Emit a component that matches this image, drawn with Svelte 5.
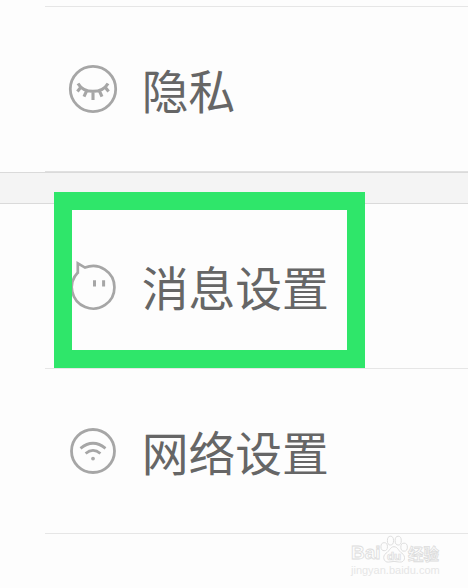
<script>
  const privacy = '隐私';
  const messages = '消息设置';
  const network = '网络设置';
</script>

<main>
  <div class="top"></div>
  <section class="row">
    <svg class="icon" viewBox="0 0 50 50">
      <circle cx="25" cy="25" r="22.7" />
      <path class="lash" d="M10 19.5C16 30 34 30 40 19.5M12.8 23.3l-3.4 4.2M18.8 26.5l-2.8 6.2M25 27.8V36M31.2 26.5l2.8 6.2M37.2 23.3l3.4 4.2" />
    </svg>
    <span>{privacy}</span>
  </section>
  <div class="gap"></div>
  <section class="row second">
    <svg class="icon" viewBox="0 0 50 50">
      <path class="thin" d="M9.8 12.8V2.3L17 6.6A21.3 21.3 0 1 1 9.8 11.5" />
      <path class="eye" d="M26.5 19.2v6.3M35.6 19.2v6.3" />
    </svg>
    <span>{messages}</span>
  </section>
  <section class="row third">
    <svg class="icon" viewBox="0 0 50 50">
      <circle cx="25" cy="25" r="21.5" />
      <path d="M12.5 22.3Q25 12.2 37.5 22.3M17.6 27.5Q25 21.3 32.4 27.5" />
      <circle class="dot" cx="25" cy="32.6" r="1.9" />
    </svg>
    <span>{network}</span>
  </section>
  <div class="frame"></div>
  <div class="watermark">
    <div class="brand">
      <b>Bai</b>
      <svg viewBox="0 0 30 30">
        <ellipse cx="4.5" cy="12" rx="3.5" ry="4.3" />
        <ellipse cx="11.2" cy="5.5" rx="3.3" ry="4.7" />
        <ellipse cx="19.5" cy="5.5" rx="3.3" ry="4.7" />
        <ellipse cx="25.8" cy="12.5" rx="3.5" ry="4.3" />
        <path d="M15 12C11 12 10 17 6.5 19C2 22 4 29 9 28.5Q15 27 21 28.5C27 29 28 22 23.5 19C20 17 19 12 15 12Z" />
        <text x="7.5" y="26">du</text>
      </svg>
      <b class="cn">经验</b>
    </div>
    <div class="site">jingyan.baidu.com</div>
  </div>
</main>

<style>
  :global(body) { margin: 0; background: #fdfdfd; }
  main {
    position: relative;
    width: 468px;
    height: 588px;
    overflow: hidden;
    background: #fdfdfd;
    font-family: "Noto Sans CJK SC", sans-serif;
  }
  .top { height: 6px; }
  .row {
    box-sizing: border-box;
    height: 166px;
    margin-left: 45px;
    padding-left: 23px;
    border-top: 1px solid #e6e6e6;
    border-bottom: 1px solid #e0e0e0;
    display: flex;
    align-items: center;
    color: #666;
    font-size: 46.8px;
    line-height: 68px;
  }
  .row span {
    margin-left: 23.7px;
    white-space: nowrap;
  }
  .icon {
    width: 50px;
    height: 50px;
    flex: none;
    overflow: visible;
    fill: none;
    stroke: #a6a6a6;
    stroke-width: 2.8;
  }
  .lash { stroke-width: 3.1; }
  .thin { stroke-width: 2.7; }
  .eye { stroke-width: 3; }
  .dot { fill: #aaa; stroke: none; }
  .gap {
    box-sizing: border-box;
    height: 32px;
    background: #f4f4f4;
    border-top: 1px solid #dadada;
    border-bottom: 1px solid #dadada;
  }
  .second { height: 165px; border-top: 0; border-bottom: 1px solid #e6e6e6; }
  .third { height: 165px; border-top: 0; border-bottom: 1px solid #e6e6e6; }
  .frame {
    position: absolute;
    left: 54px;
    top: 192px;
    width: 275px;
    height: 140px;
    border: 18px solid #2fe66a;
  }
  .watermark {
    position: absolute;
    left: 351px;
    top: 533px;
    width: 95px;
    color: #fdfdfd;
    font-family: "Liberation Sans", sans-serif;
  }
  .brand { display: flex; align-items: flex-end; height: 31px; }
  .brand b {
    font-size: 19px;
    line-height: 24px;
    width: 29px;
    margin-bottom: -1px;
    -webkit-text-stroke: 0.8px #dcdcdc;
  }
  .brand svg {
    width: 28px;
    height: 29px;
    flex: none;
    fill: #fdfdfd;
    stroke: #dcdcdc;
    stroke-width: 1;
  }
  .brand text { font-size: 12.5px; font-weight: bold; stroke-width: 0.8; }
  .brand .cn {
    font-family: "Noto Sans CJK SC", sans-serif;
    font-size: 15.5px;
    width: 32px;
    white-space: nowrap;
  }
  .site {
    font-size: 11px;
    line-height: 13px;
    color: #e6e6e6;
    white-space: nowrap;
  }
</style>
